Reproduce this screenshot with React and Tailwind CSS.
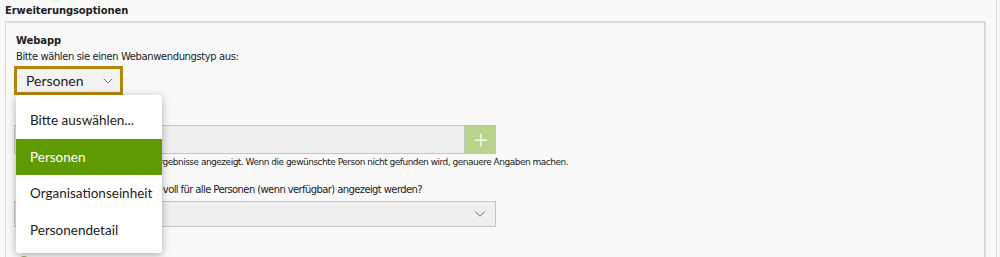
import { ChevronDown, Plus } from "lucide-react";

const options = ["Bitte auswählen...", "Personen", "Organisationseinheit", "Personendetail"];

export default function App() {
  return (
    <div className="w-[1000px] h-[257px] overflow-hidden bg-[#f9f9f9] font-['DejaVu_Sans',sans-serif] text-[10px] tracking-[-0.4px] text-[#222]">
      <div className="w-[997px] h-full border-r border-[#dcdcdc] pl-[5px] pr-[10px] pt-[4px]">
        {/* Titel */}
        <h3 className="font-bold text-[10px] leading-[14px] tracking-[-0.1px]">Erweiterungsoptionen</h3>

        {/* Box */}
        <div className="mt-[3px] border-t-2 border-r-2 border-l border-[#dadada] h-[300px] pl-[8px] pt-[11px]">
          <div className="font-bold leading-[14px] pl-[2px] tracking-[-0.1px]">Webapp</div>
          <div className="leading-[14px] pl-[2px] mt-[2px]">Bitte wählen sie einen Webanwendungstyp aus:</div>

          {/* Typ-Auswahl mit offenem Menü */}
          <div className="relative mt-[2px] w-[109px]">
            <button className="w-[109px] h-[29px] border-[3px] border-[#b5860c] bg-[#f3f3f3] flex items-center justify-between pl-[9px] pr-[4px] font-['Lato',sans-serif] text-[14px] tracking-normal text-[#222]">
              <span>Personen</span>
              <ChevronDown className="w-[16px] h-[16px] text-[#666]" strokeWidth={1.3} />
            </button>
            <div className="absolute left-[2px] top-[29px] w-[146px] bg-white rounded-[3px] shadow-[0_2px_8px_rgba(0,0,0,0.3)] pt-[7px] pb-[5px] z-10 font-['Lato',sans-serif] text-[13.5px] tracking-normal text-[#222]">
              {options.map((o) => (
                <div
                  key={o}
                  className={
                    o === "Personen"
                      ? "h-[36.5px] flex items-center pl-[14px] bg-[#5f9a04] text-white"
                      : "h-[36.5px] flex items-center pl-[14px]"
                  }
                >
                  {o}
                </div>
              ))}
            </div>
          </div>

          {/* Personensuche (verdeckt) */}
          <div className="leading-[14px] pl-[2px] mt-[9px]">Person suchen</div>
          <div className="flex mt-[7px]">
            <div className="w-[451px] h-[29px] border border-[#c6c6c6] bg-[#efefef] flex items-center pl-[8px] text-[#777]">Name eingeben</div>
            <button className="w-[31px] h-[29px] bg-[#b7d38c] flex items-center justify-center">
              <Plus className="w-[20px] h-[20px] text-white" strokeWidth={1.5} />
            </button>
          </div>
          <div className="text-[9px] leading-[12px] tracking-[-0.5px] mt-[2px] pl-[2px]">
            Es werden nur die ersten zwanzig Ergebnisse angezeigt. Wenn die gewünschte Person nicht gefunden wird, genauere Angaben machen.
          </div>

          <div className="leading-[14px] pl-[2px] mt-[15px] tracking-[-0.6px]">Soll die Detailansichten jederzeit voll für alle Personen (wenn verfügbar) angezeigt werden?</div>
          <button className="mt-[4px] w-[482px] h-[26px] border border-[#c6c6c6] bg-[#efefef] flex items-center justify-between pl-[10px] pr-[6px] font-['Lato',sans-serif] text-[16px] tracking-normal text-[#222]">
            <span>Bitte auswählen</span>
            <ChevronDown className="w-[18px] h-[18px] text-[#666]" strokeWidth={1.3} />
          </button>

          <div className="font-bold leading-[14px] pl-[2px] mt-[14px]">Sortierung</div>
          <div className="mt-[1px] ml-[4px] w-[12px] h-[12px] rounded-full border-2 border-[#9bb35a] bg-white" />
        </div>
      </div>
    </div>
  );
}
